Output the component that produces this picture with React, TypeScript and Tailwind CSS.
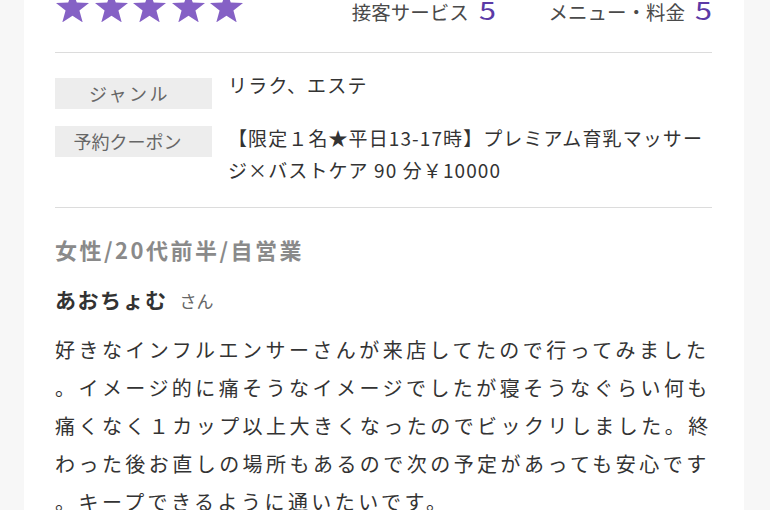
import React from "react";

const Star = () => (
  <svg viewBox="0 0 95.1 90.45" className="w-[33px] h-[31.4px] shrink-0" fill="#8561c5">
    <polygon points="47.55,0 59.89,33.01 95.1,34.55 67.52,56.49 76.94,90.45 47.55,71 18.16,90.45 27.58,56.49 0,34.55 35.21,33.01" />
  </svg>
);

const jp = { fontFamily: '"Noto Sans CJK JP", "Noto Sans", sans-serif' };

export default function App() {
  const body = [
    "好きなインフルエンサーさんが来店してたので行ってみました",
    "。イメージ的に痛そうなイメージでしたが寝そうなぐらい何も",
    "痛くなく１カップ以上大きくなったのでビックリしました。終",
    "わった後お直しの場所もあるので次の予定があっても安心です",
    "。キープできるように通いたいです。",
  ];
  return (
    <div className="w-full h-[510px] bg-[#f7f7f7] flex pl-[24px] pr-[26px] overflow-hidden" style={jp}>
      <div className="flex-1 bg-white pl-[31px] pr-[32px] overflow-hidden flex flex-col">
        {/* top row */}
        <div className="shrink-0 flex justify-between items-start h-[52px]">
          <div className="flex gap-[5.5px] mt-[-9.5px] ml-[1px]">
            <Star />
            <Star />
            <Star />
            <Star />
            <Star />
          </div>
          <div className="flex items-baseline mr-[3px] text-[#4a4a4a]">
            <span className="text-[19.5px] leading-[23px]">接客サービス</span>
            <span className="ml-[10px] inline-block origin-left scale-x-[1.22] text-[25px] leading-[18px] text-[#5b3aa6]">5</span>
            <span className="ml-[56px] text-[19.5px] leading-[23px]">メニュー・料金</span>
            <span className="ml-[10px] inline-block origin-left scale-x-[1.22] text-[25px] leading-[18px] text-[#5b3aa6]">5</span>
          </div>
        </div>
        <div className="shrink-0 h-px bg-[#dcdcdc]" />

        {/* info */}
        <div className="shrink-0 flex flex-col gap-[17px] pt-[25px] pb-[21px]">
          <div className="flex items-start">
            <div className="w-[157px] h-[31px] pr-[8px] bg-[#ededed] text-[#666] text-[18px] tracking-[2.5px] flex items-center justify-center shrink-0">
              ジャンル
            </div>
            <div className="ml-[16px] mt-[-9px] text-[19px] leading-[32px] tracking-[1.2px] text-[#333]">リラク、エステ</div>
          </div>
          <div className="flex items-start">
            <div className="w-[157px] h-[31px] pr-[12px] bg-[#ededed] text-[#666] text-[18px] flex items-center justify-center shrink-0">
              予約クーポン
            </div>
            <div className="ml-[16px] mt-[-4.5px] text-[19px] leading-[32px] tracking-[1.1px] text-[#333]">
              <div className="whitespace-nowrap">【限定１名★平日13-17時】プレミアム育乳マッサー</div>
              <div className="whitespace-nowrap">ジ×バストケア 90 分￥10000</div>
            </div>
          </div>
        </div>
        <div className="shrink-0 h-px bg-[#dcdcdc]" />

        {/* review */}
        <div className="shrink-0 pt-[25px]">
          <div className="text-[22px] leading-[32px] font-bold tracking-[2.5px] text-[#8a8a8a] whitespace-nowrap">
            女性/20代前半/自営業
          </div>
          <div className="mt-[18px] leading-[32px] whitespace-nowrap flex items-baseline">
            <span className="text-[21px] font-bold tracking-[1.5px] text-[#333]">あおちょむ</span>
            <span className="ml-[12px] text-[17px] text-[#666]">さん</span>
          </div>
          <div className="mt-[14px] text-[20px] leading-[38px] tracking-[3.45px] text-[#333]">
            {body.map((l, i) => (
              <div key={i} className="whitespace-nowrap">
                {l}
              </div>
            ))}
          </div>
        </div>
      </div>
    </div>
  );
}
